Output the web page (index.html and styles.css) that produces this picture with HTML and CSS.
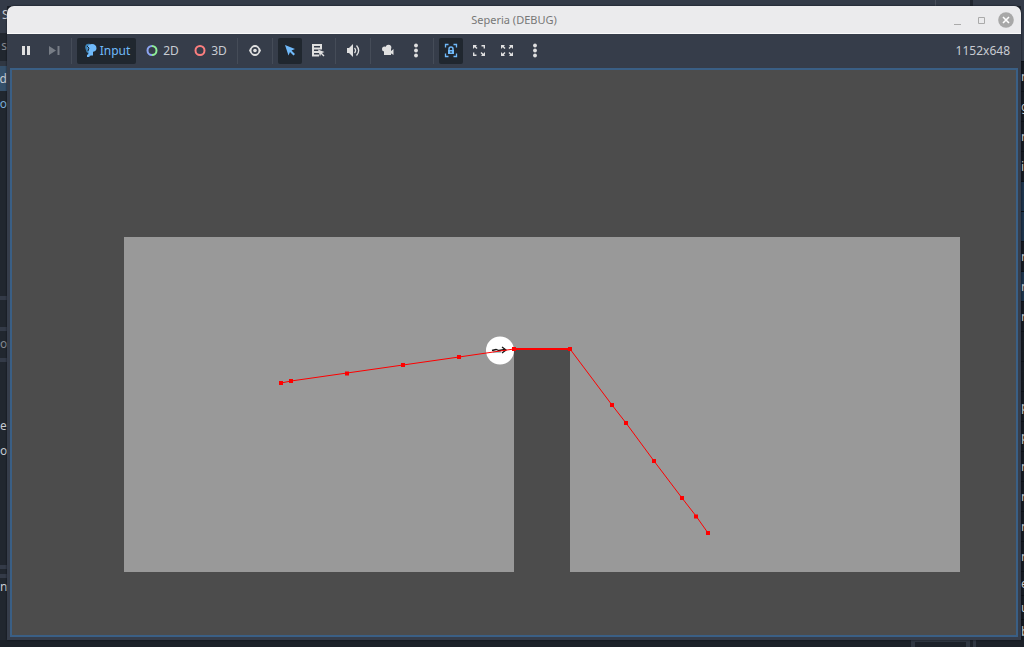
FILE: index.html
```html
<!DOCTYPE html>
<html lang="en">
<head>
<meta charset="utf-8">
<title>Seperia (DEBUG)</title>
<link rel="stylesheet" href="styles.css">
</head>
<body>
<div class="editor" aria-hidden="true">
  <div class="editor-top"><i class="top-mark"></i><i class="top-bar"></i></div>
  <div class="dock dock-left">
    <span class="cell menu">S</span>
    <span class="cell dim tab">s</span>
    <span class="cell picked">d</span>
    <span class="cell accent">o</span>
    <span class="cell tall"></span>
    <span class="cell divided"></span>
    <span class="cell dim divided start">od</span>
    <span class="cell divided spacer"></span>
    <span class="cell start">er</span>
    <span class="cell start">oc</span>
    <span class="cell fill"></span>
    <span class="cell double"></span>
    <span class="cell start last">no</span>
  </div>
  <div class="dock dock-right">
    <span class="row head"></span>
    <span class="row">n</span>
    <span class="row">g</span>
    <span class="row">n</span>
    <span class="row">i</span>
    <span class="row blue"></span>
    <span class="row blue"></span>
    <span class="row">n</span>
    <span class="row blue">n</span>
    <span class="row">n</span>
    <span class="row"></span>
    <span class="row"></span>
    <span class="row">p</span>
    <span class="row">p</span>
    <span class="row">n</span>
    <span class="row">n</span>
    <span class="row">n</span>
    <span class="row">n</span>
    <span class="row short">e</span>
    <span class="row short">u</span>
    <span class="row short">b</span>
  </div>
  <div class="editor-bottom"><i class="bottom-tab"></i><i class="bottom-bar"></i></div>
</div>

<main class="window">
  <header class="titlebar">
    <h1 class="title">Seperia (DEBUG)</h1>
    <div class="controls">
      <button class="control" aria-label="Minimize"><svg width="16" height="16"><path d="M4 12.500h7" stroke="#aaa" fill="none"/></svg></button>
      <button class="control" aria-label="Maximize"><svg width="16" height="16"><path d="M4.500 5.500h6v6h-6z" stroke="#aaa" fill="none"/></svg></button>
      <button class="control" aria-label="Close"><svg width="16" height="16"><circle cx="8" cy="8" r="7.800" fill="#a8a8a8"/><path d="M5 5l6 6M11 5l-6 6" stroke="#fff" stroke-width="1.600" fill="none"/></svg></button>
    </div>
  </header>

  <nav class="toolbar" aria-label="Game tools">
    <button class="tool" aria-label="Pause"><svg width="16" height="16" fill="#e0e0e0"><path d="M4 4h3v9H4zM9 4h3v9H9z"/></svg></button>
    <button class="tool" aria-label="Next frame" disabled><svg width="16" height="16" fill="#777d86"><path d="M3 4l7 4.500L3 13zM11.500 4h2v9h-2z"/></svg></button>
    <span class="sep"></span>
    <button class="tool wide input-mode on" aria-pressed="true"><svg width="16" height="16"><path d="M7 2C4 1 2 3 2.200 5.500c.2 2 1 2.500 1.300 4.500l2 1.500V14h2V8z" fill="#3f83b5"/><path d="M9 2c2.800 0 4.500 1.800 4.500 4.200 0 1.800-1.200 3-2.800 3.300L10 10v3.500H6.500V15H4v-2l1.500-1V9.500L4.500 5.500C5 3.200 6.500 2 9 2z" fill="#70bafa"/><path d="M4 4l2 2-1 3" stroke="#20272f" fill="none"/></svg>Input</button>
    <button class="tool wide"><svg width="14" height="16" fill="none" stroke-width="2"><path d="M7 4a4.500 4.500 0 0 0 0 9" stroke="#8da5f3"/><path d="M7 4a4.500 4.500 0 0 1 0 9" stroke="#8eef97"/></svg>2D</button>
    <button class="tool wide"><svg width="14" height="16"><circle cx="7" cy="8.500" r="4.500" fill="none" stroke="#fc7f7f" stroke-width="2"/></svg>3D</button>
    <span class="sep"></span>
    <button class="tool" aria-label="Visibility"><svg width="16" height="16"><path d="M2 8.500C3.500 5 5.500 3 8 3s4.500 2 6 5.500C12.500 12 10.500 14 8 14S3.500 12 2 8.500z" fill="#e0e0e0"/><circle cx="8" cy="8.500" r="3.500" fill="#363d4a"/><circle cx="8" cy="8.500" r="1.800" fill="#e0e0e0"/></svg></button>
    <span class="sep"></span>
    <button class="tool on" aria-label="Select" aria-pressed="true"><svg width="16" height="16" fill="#70bafa"><path d="M3 3l10 4-3.500 1.500 3.500 3.500-1.500 1.500L8 10l-1.500 3.500z"/></svg></button>
    <button class="tool" aria-label="List select"><svg width="16" height="16"><path d="M3 3h8v3.500H3zM3 6v7.500h6M3 10h6" fill="none" stroke="#e0e0e0" stroke-width="2"/><path d="M8 7.500l6.500 2.500-2.500 1 2.500 2.500-1 1-2.500-2.500-1 2.500z" fill="#e0e0e0"/></svg></button>
    <span class="sep"></span>
    <button class="tool" aria-label="Mute"><svg width="16" height="16"><path d="M2 6h2l4-4v13l-4-4H2z" fill="#e0e0e0"/><path d="M9.500 6c1.300 1.500 1.300 3.500 0 5M11.500 3.500c2.600 3 2.600 7 0 10" fill="none" stroke="#e0e0e0" stroke-width="1.300"/></svg></button>
    <span class="sep"></span>
    <button class="tool" aria-label="Override camera"><svg width="16" height="16" fill="#e0e0e0"><circle cx="4.500" cy="7" r="2.500"/><circle cx="8.500" cy="5.500" r="2.800"/><path d="M4 7h7v6H4zM10.500 9.500L13.500 7v6l-3-2z"/></svg></button>
    <button class="tool" aria-label="Camera options"><svg width="16" height="16" fill="#e0e0e0"><circle cx="8" cy="3.500" r="1.900"/><circle cx="8" cy="8.500" r="1.900"/><circle cx="8" cy="13.500" r="1.900"/></svg></button>
    <span class="sep"></span>
    <button class="tool on" aria-label="Embed size locked" aria-pressed="true"><svg width="16" height="16"><path d="M2.500 5.500v-3h3M10.500 2.500h3v3M13.500 11.500v3h-3M5.500 14.500h-3v-3" fill="none" stroke="#70bafa" stroke-width="1.300"/><path d="M6 8V7a2 2 0 0 1 4 0v1" fill="none" stroke="#70bafa" stroke-width="1.500"/><path d="M5 8h6v4H5z" fill="#70bafa"/><path d="M7.500 9h1v2h-1z" fill="#20272f"/></svg></button>
    <button class="tool" aria-label="Keep aspect"><svg width="16" height="16" fill="#e0e0e0"><path d="M2 3h4L4.800 4.200 6.500 6l-1 1-1.800-1.700L2 7zM14 14h-4l1.200-1.200L9.500 11l1-1 1.800 1.700L14 10z"/><path d="M10.500 3.700h2.800v2.800M2.700 10.500v2.800h2.800" fill="none" stroke="#e0e0e0" stroke-width="1.400"/></svg></button>
    <button class="tool" aria-label="Stretch"><svg width="16" height="16" fill="#e0e0e0"><path d="M2 3h4L4.800 4.200 6.500 6l-1 1-1.800-1.700L2 7zM14 14h-4l1.200-1.200L9.500 11l1-1 1.800 1.700L14 10zM14 3v4l-1.700-1.700L10.500 7l-1-1 1.700-1.800L10 3zM2 14v-4l1.700 1.700L5.500 10l1 1-1.700 1.800L6 14z"/></svg></button>
    <button class="tool" aria-label="More options"><svg width="16" height="16" fill="#e0e0e0"><circle cx="8" cy="3.500" r="1.900"/><circle cx="8" cy="8.500" r="1.900"/><circle cx="8" cy="13.500" r="1.900"/></svg></button>
    <output class="resolution">1152x648</output>
  </nav>

  <section class="game" aria-label="Game view">
    <svg class="scene" viewBox="12 70 1004 565" role="img" aria-label="Navigation path around an obstacle">
      <path d="M124 237h836v335H570V349h-56v223H124z" fill="#999"/>
      <circle cx="500" cy="350.500" r="14" fill="#fff"/>
      <path d="M492 350.500l4-1 3 1 6-1M502 347l4 3-4 3" fill="none" stroke="#151515" stroke-width="1.300"/>
      <path d="M493 352h8" stroke="#4e9da3" stroke-width="1"/>
      <path d="M281 383l10-2 56-8 56-8 56-8 55-8M570 349l42 56 14 18 28 38 28 37 14 18 12 17" fill="none" stroke="#f00" stroke-width="1"/>
      <path d="M514 349h56" stroke="#f00" stroke-width="2"/>
      <path d="M279 381h4v4h-4zM289 379h4v4h-4zM345 371.500h4v4h-4zM401 363h4v4h-4zM457 355h4v4h-4zM512 347h4v4h-4zM568 347h4v4h-4zM610 403h4v4h-4zM624 421h4v4h-4zM652 459h4v4h-4zM680 496h4v4h-4zM694 514.500h4v4h-4zM706 531h4v4h-4z" fill="#f00"/>
    </svg>
  </section>
</main>
</body>
</html>
```
FILE: styles.css
```css
* { box-sizing: border-box; }

body {
  margin: 0;
  height: 100vh;
  display: flex;
  padding: 6px 3px 7px 7px;
  overflow: hidden;
  background: #1c2129;
  font-family: "Noto Sans", sans-serif;
  font-size: 12px;
  color: #c8ccd2;
}

/* Editor behind the game window */
.editor {
  position: absolute;
  inset: 0;
  overflow: hidden;
  display: grid;
  grid-template: 6px 1fr 7px / 7px 1fr 3px;
}
.editor-top {
  grid-column: 1 / -1;
  display: flex;
  justify-content: flex-end;
  gap: 34px;
  padding-right: 51px;
  background: #343b48;
}
.top-mark { width: 1px; background: #4a505b; }
.top-bar { width: 3px; background: #20262f; }
.dock { overflow: hidden; display: flex; flex-direction: column; }
.dock-left { grid-column: 1; background: #21272f; }
.dock-right { grid-column: 3; background: #161b22; }
.cell {
  flex: none;
  display: flex;
  justify-content: flex-end;
  height: 25px;
  line-height: 25px;
}
.cell.start { justify-content: flex-start; }
.cell.menu { height: 27px; line-height: 18px; background: #343b48; justify-content: flex-start; padding-left: 2px; }
.cell.tab { height: 33px; line-height: 26px; border-bottom: 5px solid #303742; }
.cell.dim { color: #858a92; }
.cell.picked { background: #35506a; }
.cell.accent { color: #7cadd8; }
.cell.tall { height: 180px; }
.cell.divided { height: 31px; line-height: 26px; border-top: 4px solid #343b48; }
.cell.spacer { height: 55px; }
.cell.fill { height: 102px; }
.cell.double { height: 13px; border: solid #343b48; border-width: 4px 0; }
.cell.last { line-height: 18px; }
.row {
  flex: none;
  height: 30px;
  line-height: 30px;
  border-bottom: 1px solid #0d1117;
}
.row.head { height: 56px; background: #343b48; }
.row.short { height: 24px; line-height: 24px; }
.row.blue { background: #1d344c; }
.editor-bottom {
  grid-column: 1 / -1;
  display: flex;
  justify-content: flex-end;
  gap: 3px;
  padding-right: 48px;
  background: #1c2129;
}
.bottom-tab { width: 59px; border: solid #303742; border-width: 2px 4px 0; }
.bottom-bar { width: 3px; background: #303742; }

/* Game window */
.window {
  position: relative;
  flex: 1;
  display: flex;
  flex-direction: column;
  overflow: hidden;
  border-radius: 7px 7px 0 0;
  background: #363d4a;
  box-shadow: 0 0 2px #0b0e14;
}
.titlebar {
  display: grid;
  grid-template-columns: 1fr auto 1fr;
  align-items: center;
  height: 28px;
  padding: 0 7px;
  background: #ebebed;
  border-bottom: 1px solid #fafafa;
}
.title {
  grid-column: 2;
  margin: 0;
  font-size: 11px;
  font-weight: 400;
  color: #777;
}
.controls { display: flex; justify-content: flex-end; gap: 8px; }
.control, .tool {
  display: flex;
  align-items: center;
  justify-content: center;
  padding: 0;
  border: 0;
  background: none;
  font: inherit;
  color: inherit;
}
.toolbar {
  display: flex;
  align-items: center;
  gap: 4px;
  height: 34px;
  padding: 0 11px 0 7px;
}
.tool { width: 24px; height: 26px; padding-bottom: 2px; border-radius: 2px; }
.tool.wide { width: 44px; gap: 4px; }
.tool.input-mode { width: 59px; gap: 1px; }
.tool.on { background: #20272f; color: #70bafa; }
.sep {
  width: 3px;
  height: 26px;
  border: solid transparent;
  border-width: 0 1px;
  background: #454c58;
  background-clip: padding-box;
}
.resolution { margin-left: auto; padding-bottom: 2px; }
.game {
  flex: 1;
  min-height: 0;
  margin: 0 3px 3px;
  border: 2px solid #3a5f85;
  background: #4c4c4c;
}
.scene { display: block; width: 100%; height: 100%; }
```
